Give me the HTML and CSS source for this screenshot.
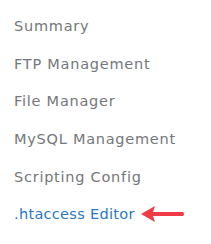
FILE: index.html
```html
<!DOCTYPE html>
<html>
<head>
<meta charset="utf-8">
<link rel="stylesheet" href="styles.css">
</head>
<body>
<ul class="menu">
  <li class="item">Summary</li>
  <li class="item">FTP Management</li>
  <li class="item">File Manager</li>
  <li class="item">MySQL Management</li>
  <li class="item">Scripting Config</li>
  <li class="item active"><span>.htaccess Editor</span>
    <svg class="arrow" width="44" height="18" viewBox="0 0 44 18">
      <path d="M0 9 L14 1 L12 7 L42 7 Q44 9 42 11 L12 11 L14 17 Z" fill="#ee3b45"/>
    </svg>
  </li>
</ul>
</body>
</html>
```
FILE: styles.css
```css
html, body {
  margin: 0;
  padding: 0;
  background: #ffffff;
}
.menu {
  list-style: none;
  margin: 0;
  padding: 13px 0 0 14px;
  font-family: "DejaVu Sans", sans-serif;
  font-size: 14.5px;
  font-weight: 400;
  letter-spacing: 0.75px;
}
.item {
  height: 37.7px;
  line-height: 26px;
  color: #74777c;
  display: flex;
  align-items: flex-start;
}
.item.active {
  color: #2a78c6;
  letter-spacing: 0.3px;
}
.arrow {
  margin-left: 6px;
  margin-top: 4px;
}
```
